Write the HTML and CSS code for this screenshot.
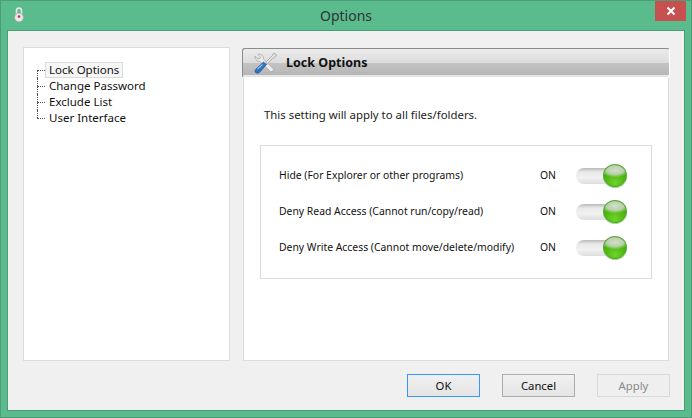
FILE: index.html
```
<!DOCTYPE html>
<html lang="en">
<head>
<meta charset="utf-8">
<title>Options</title>
<link rel="stylesheet" href="styles.css">
</head>
<body>
<div class="window">
  <header class="titlebar">
    <svg class="app-icon" width="10" height="16" viewBox="0 0 10 16">
      <path d="M2.500 7V3.600a2.500 2.500 0 0 1 5 0V7" fill="none" stroke="#e4e4e4" stroke-width="1.600"/>
      <circle cx="5" cy="10.500" r="4.400" fill="#e8e8e8" stroke="#a9a9a9" stroke-width=".8"/>
      <circle cx="5" cy="9.600" r="1.300" fill="#d8323c"/>
    </svg>
    <div class="title">Options</div>
    <div class="close">
      <svg width="10" height="10" viewBox="0 0 10 10"><path d="M1.500 1.500l7 7M8.500 1.500l-7 7" stroke="#fff" stroke-width="2"/></svg>
    </div>
  </header>
  <div class="client">
    <div class="main">
      <ul class="tree">
        <li class="tree-item selected"><span>Lock Options</span></li>
        <li class="tree-item"><span>Change Password</span></li>
        <li class="tree-item"><span>Exclude List</span></li>
        <li class="tree-item"><span>User Interface</span></li>
      </ul>
      <section class="panel">
        <div class="panel-head">
          <svg class="tools" width="26" height="24" viewBox="0 0 26 24">
            <path d="M5 3.500l2.500 2.500-1 2-2.500-.5L2 5c0 3 1.500 5.500 5 5.500l11 10.500 3-2.500L10.500 8C10.500 4.500 8 2.500 5 3.500z" fill="#ececec" stroke="#a8a8a8" stroke-width=".8"/>
            <path d="M13 11l6.500-6.500 1-2.500 3 1.500-1.500 3-2.500 1L14 13.500z" fill="#e2e2e2" stroke="#a4a4a4" stroke-width=".8"/>
            <path d="M3.500 17.500l7-6.500 3 2.500-6.500 7.500c-1.500 1.500-3.500 1.500-4.500.5s-.5-2.500 1-4z" fill="#2f73c4" stroke="#1d4f91" stroke-width=".6"/>
            <path d="M4.500 18l5-4.500" stroke="#8fbce8" stroke-width="1.200"/>
          </svg>
          <h2>Lock Options</h2>
        </div>
        <div class="panel-body">
          <p class="note">This setting will apply to all files/folders.</p>
          <div class="group">
            <div class="row"><span class="label">Hide (For Explorer or other programs)</span><span class="state">ON</span><span class="toggle"><i class="knob"></i></span></div>
            <div class="row"><span class="label">Deny Read Access (Cannot run/copy/read)</span><span class="state">ON</span><span class="toggle"><i class="knob"></i></span></div>
            <div class="row"><span class="label">Deny Write Access (Cannot move/delete/modify)</span><span class="state">ON</span><span class="toggle"><i class="knob"></i></span></div>
          </div>
        </div>
      </section>
    </div>
    <footer class="buttons">
      <button class="btn default">OK</button>
      <button class="btn">Cancel</button>
      <button class="btn disabled">Apply</button>
    </footer>
  </div>
</div>
</body>
</html>
```
FILE: styles.css
```
* { box-sizing: border-box; }
html, body { margin: 0; padding: 0; }
body { width: 692px; height: 418px; overflow: hidden; font-family: "Noto Sans", sans-serif; font-size: 10.4px; color: #111; }
.window { width: 692px; height: 418px; background: #5abb8d; border: 1px solid #4c9c78; display: flex; flex-direction: column; padding: 0 6px 6px; }
.titlebar { height: 29px; display: grid; grid-template-columns: 1fr auto 1fr; align-items: start; flex: none; }
.app-icon { margin: 6px 0 0 7px; }
.title { font-size: 14px; line-height: 20px; margin-top: 5px; color: #333; }
.close { justify-self: end; width: 31px; height: 20px; margin-right: -1px; background: #c75050; display: flex; align-items: center; justify-content: center; }
.client { flex: 1; background: #f0f0f0; border: 1px solid #4c9c78; display: flex; flex-direction: column; padding: 16px 15px 0; }
.main { display: flex; gap: 13px; height: 314px; }
.tree { width: 207px; margin: 0; padding: 14px 0 0 13px; list-style: none; background: #fff; border: 1px solid #dcdcdc; font-size: 11.500px; }
.tree-item { position: relative; height: 16px; line-height: 16px; padding-left: 8px; white-space: nowrap; }
.tree-item::before { content: ""; position: absolute; left: 0; top: 8px; width: 8px; border-top: 1px dotted #555; }
.tree-item::after { content: ""; position: absolute; left: 0; top: 0; height: 16px; border-left: 1px dotted #555; }
.tree-item:first-child::after { top: 8px; height: 8px; }
.tree-item:last-child::after { height: 8px; }
.tree-item span { display: inline-block; padding: 0 3px; height: 16px; line-height: 14px; border: 1px solid transparent; }
.selected span { background: #f6f6f6; border-color: #dcdcdc; }
.panel { flex: 1; display: flex; flex-direction: column; margin-top: 1px; background: #fff; border: 1px solid #dcdcdc; border-top: 0; }
.panel-head { margin: 0 -2px; height: 30px; flex: none; display: flex; align-items: center; gap: 7px; padding-left: 10px; border: 1px solid #8a8a8a; border-bottom-color: #fff; border-right-color: #fff; border-radius: 3px; background: linear-gradient(#ececec 0, #dcdcdc 50%, #c4c4c4 50%, #b6b6b6 92%, #e6e6e6 92%); }
.panel-head h2 { margin: 0; font-size: 12.500px; line-height: 18px; font-weight: 700; color: #111; }
.panel-body { flex: 1; padding: 0 16px 0 16px; }
.note { margin: 28px 0 0 4px; line-height: 18px; font-size: 11.400px; color: #222; }
.group { margin-top: 21px; height: 134px; border: 1px solid #dcdcdc; padding: 11px 0 0 18px; }
.row { height: 36px; display: flex; align-items: center; }
.label { width: 261px; white-space: nowrap; }
.state { width: 36px; }
.toggle { position: relative; width: 46px; height: 16px; margin-top: 2px; border-radius: 8px; background: linear-gradient(#b9b9b9 0, #e9e9e9 25%, #f1f1f1 60%, #dedede 100%); }
.knob { position: absolute; left: 27px; top: -4px; width: 24px; height: 23px; border-radius: 50%; border: 1px solid #5aa53a; background: radial-gradient(ellipse 65% 35% at 50% 24%, #d2dfc9 0, #b8d0a8 60%, transparent 100%), radial-gradient(circle at 50% 85%, #6fd32a 0, #48b30a 55%, #3c9f06 100%); box-shadow: 0 1px 0 #a5dc85; }
.buttons { flex: 1; display: flex; justify-content: flex-end; gap: 22px; padding: 13px 0 0; margin-right: -1px; }
.btn { width: 73px; height: 23px; padding: 0; font: 11.300px/1 "Noto Sans", sans-serif; color: #111; background: linear-gradient(#f0f0f0, #e5e5e5); border: 1px solid #acacac; }
.btn.default { border-color: #3399ff; }
.btn.disabled { background: #efefef; border-color: #d9d9d9; color: #8a8a8a; }
```
